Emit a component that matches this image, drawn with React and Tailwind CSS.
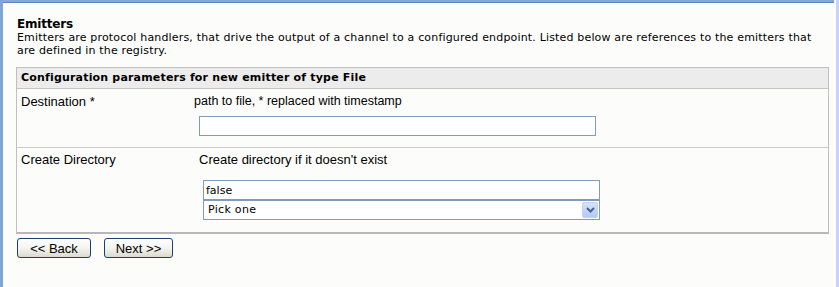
import React from "react";

const verdana = { fontFamily: '"DejaVu Sans", Verdana, sans-serif' };
const arial = { fontFamily: '"Liberation Sans", Arial, sans-serif' };

const Chevron = () => (
  <svg width="9" height="6" viewBox="0 0 9 6">
    <path d="M1 1 L4.5 4.5 L8 1" fill="none" stroke="#4d6185" strokeWidth="2" />
  </svg>
);

const XpButton = ({ label, width }) => (
  <button
    className={`h-[20px] ${width} rounded-[3px] border border-[#1f3f6e] bg-gradient-to-b from-white via-[#f4f4f0] to-[#dcdad0] text-[13px] text-black leading-none`}
    style={arial}
  >
    {label}
  </button>
);

export default function App() {
  return (
    <div className="w-[839px] h-[287px] flex bg-[#fcfdfb] overflow-hidden">
      <div className="w-[834px] flex flex-col border-l-[3px] border-[#7ea5d6]">
        <div className="h-[2px] bg-[#84a8d8]" />
        <div className="h-[1px] bg-[#5f86bd]" />

        <div className="pl-[13px] pr-[5px] pt-[15px]">
          <div className="pl-[1px] text-[11px] leading-[13px] text-black">
            <h2 className="font-bold text-[12px] tracking-[-0.2px]" style={verdana}>Emitters</h2>
            <p className="tracking-[0.17px]" style={verdana}>
              Emitters are protocol handlers, that drive the output of a channel to a configured endpoint. Listed below are references to the emitters that
              <br />
              are defined in the registry.
            </p>
          </div>

          <div className="mt-[10px] border border-[#c0c0c0] border-b-2 border-b-[#b8b8b8]">
            <div
              className="h-[21px] flex items-center pl-[4px] bg-[#ececec] border-b border-[#c4c4c4] text-[11px] font-bold tracking-[0.18px] text-black"
              style={verdana}
            >
              Configuration parameters for new emitter of type File
            </div>

            <div className="flex h-[59px] border-b border-[#cacaca] text-[13px] text-black" style={arial}>
              <div className="w-[177px] pl-[4px] pt-[5px] leading-[15px]">Destination *</div>
              <div className="flex-1 pt-[5px]">
                <div className="leading-[15px] text-[12.5px]">path to file, * replaced with timestamp</div>
                <input
                  type="text"
                  className="block mt-[7px] ml-[5px] w-[397px] h-[20px] border border-[#7f9db9] bg-white outline-none"
                />
              </div>
            </div>

            <div className="flex h-[84px] text-[13px] text-black" style={arial}>
              <div className="w-[177px] pl-[4px] pt-[4px] leading-[15px]">Create Directory</div>
              <div className="flex-1 pt-[4px] pl-[5px]">
                <div className="leading-[15px]">Create directory if it doesn't exist</div>
                <input
                  type="text"
                  defaultValue="false"
                  className="block mt-[13px] ml-[4px] w-[397px] h-[20px] px-[2px] border border-[#7f9db9] bg-white text-[11px] text-black outline-none"
                  style={verdana}
                />
                <div className="ml-[4px] w-[397px] h-[20px] flex items-center justify-between pl-[4px] pr-[1px] border border-[#7f9db9] bg-white">
                  <span className="text-[11px] tracking-[0.3px]" style={verdana}>Pick one</span>
                  <span className="w-[16px] h-[16px] flex items-center justify-center rounded-[2px] bg-gradient-to-b from-[#d4e2fc] to-[#b3c9f6] border border-[#c0d2f6]">
                    <Chevron />
                  </span>
                </div>
              </div>
            </div>
          </div>

          <div className="mt-[4px] pl-[1px] flex gap-[13px]">
            <XpButton label="<< Back" width="w-[74px]" />
            <XpButton label="Next >>" width="w-[69px]" />
          </div>
        </div>
      </div>
      <div className="flex-1 flex">
        <div className="w-[2px] bg-white" />
        <div className="flex-1 bg-[#c7d3fa]" />
      </div>
    </div>
  );
}
